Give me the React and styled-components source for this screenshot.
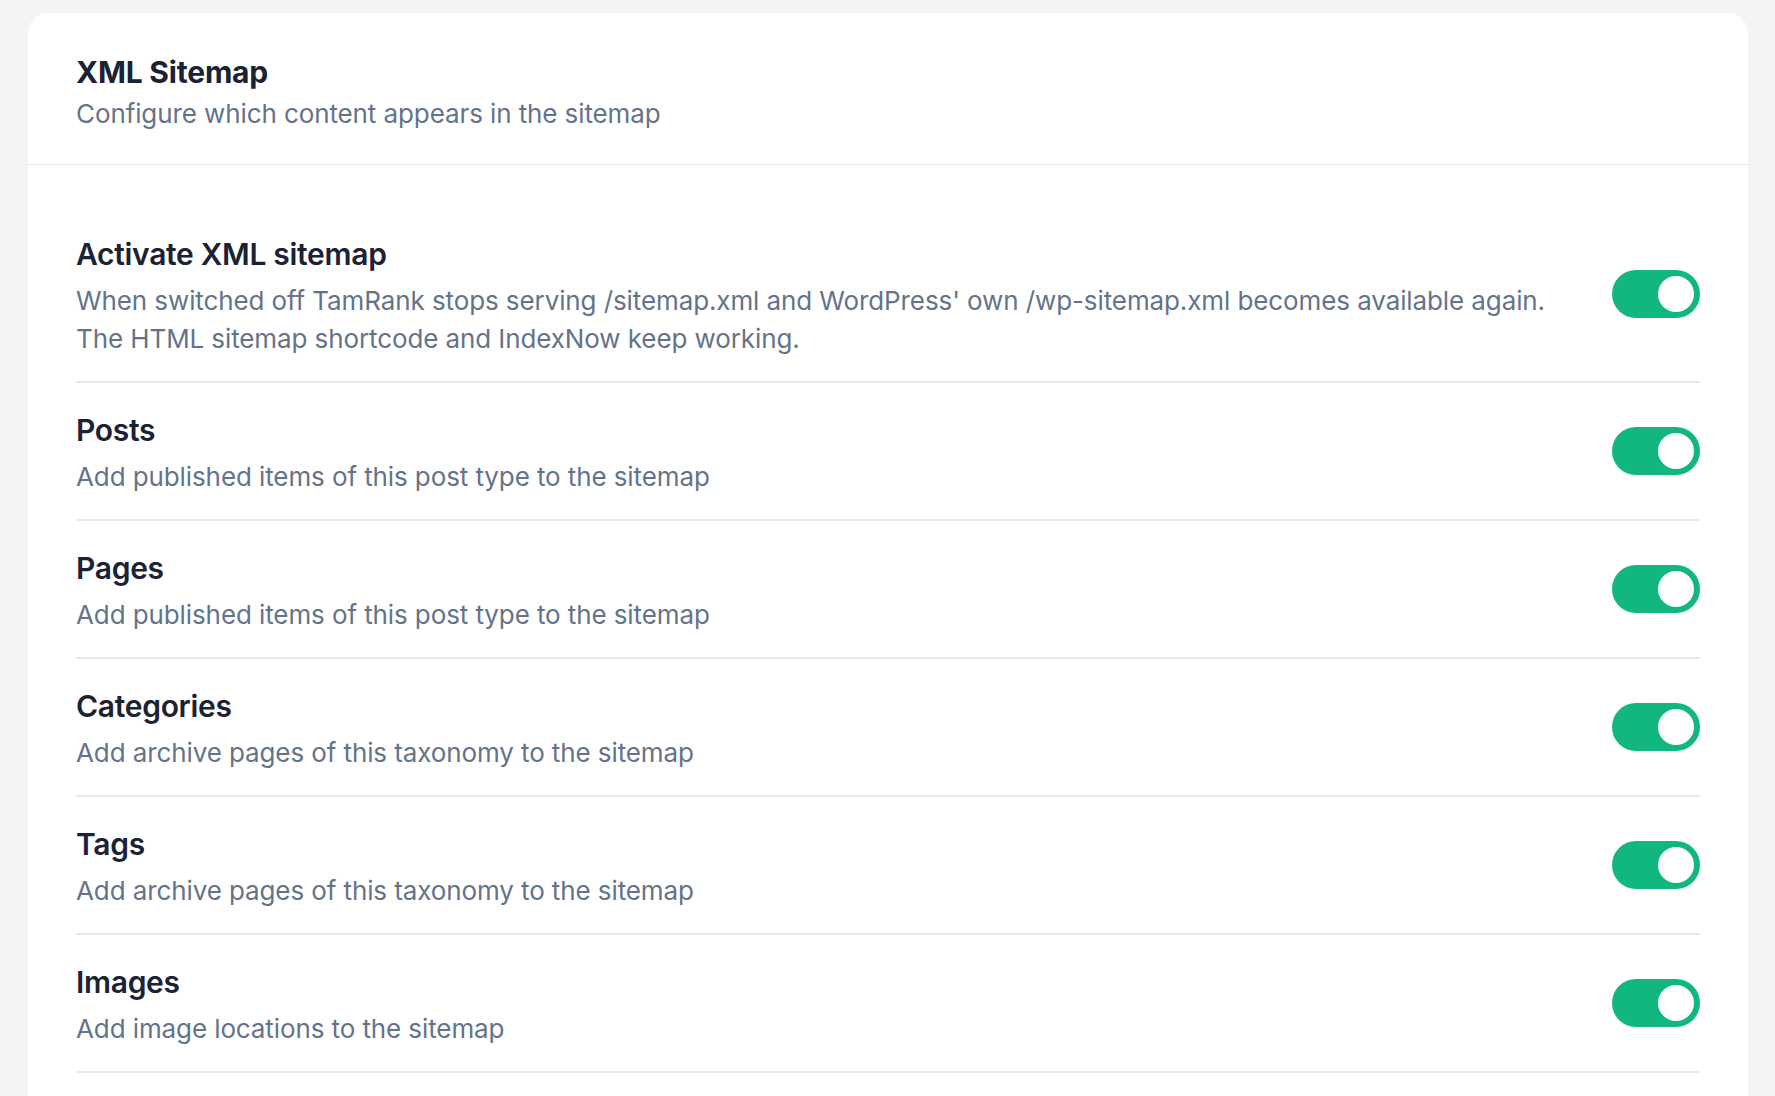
import React, { useState } from "react";
import styled, { createGlobalStyle } from "styled-components";

const GlobalStyle = createGlobalStyle`
  html, body {
    margin: 0;
    padding: 0;
    background: #f5f4f2;
  }
  body {
    font-family: Inter, "Noto Sans", sans-serif;
    -webkit-font-smoothing: antialiased;
  }
`;

const Page = styled.div`
  padding: 13px 27px 0 28px;
  min-height: 100vh;
  box-sizing: border-box;
`;

const Card = styled.section`
  background: #ffffff;
  border-radius: 20px;
  box-shadow: 0 1px 2px rgba(0, 0, 0, 0.03);
  overflow: hidden;
`;

const Header = styled.header`
  display: flex;
  flex-direction: column;
  gap: 3px;
  padding: 39px 48px 31px;
  border-bottom: 1.5px solid #e8e8e8;
`;

const Heading = styled.h2`
  margin: 0;
  font-size: 30px;
  line-height: 40px;
  font-weight: 700;
  letter-spacing: -0.2px;
  color: #1b2233;
`;

const Subheading = styled.p`
  margin: 0;
  font-size: 26px;
  line-height: 38px;
  font-weight: 400;
  letter-spacing: -0.1px;
  color: #65738a;
`;

const List = styled.div`
  padding: 42px 48px 48px;
`;

const Row = styled.div`
  display: flex;
  align-items: center;
  justify-content: space-between;
  gap: 48px;
  padding: 27px 0 23px;
  border-bottom: 2px solid #e9e9e9;
`;

const Text = styled.div`
  display: flex;
  flex-direction: column;
  gap: 8px;
  min-width: 0;
`;

const Title = styled.h3`
  margin: 0;
  font-size: 30px;
  line-height: 40px;
  font-weight: 600;
  letter-spacing: -0.3px;
  color: #1b2233;
`;

const Description = styled.p`
  margin: 0;
  font-size: 26px;
  line-height: 38px;
  font-weight: 400;
  letter-spacing: -0.1px;
  color: #65738a;
`;

const Switch = styled.button`
  flex: none;
  position: relative;
  width: 88px;
  height: 48px;
  margin-bottom: 4px;
  padding: 0;
  border: none;
  border-radius: 24px;
  background: ${props => (props.on ? "#12b77f" : "#d4d7dd")};
  cursor: pointer;
  transition: background 0.2s ease-in-out;
`;

const Knob = styled.span`
  position: absolute;
  top: 6px;
  left: ${props => (props.on ? "46px" : "6px")};
  width: 36px;
  height: 36px;
  border-radius: 50%;
  background: #ffffff;
  transition: left 0.2s ease-in-out;
`;

const settings = [
  {
    id: "sitemap",
    title: "Activate XML sitemap",
    description: [
      "When switched off TamRank stops serving /sitemap.xml and WordPress' own /wp-sitemap.xml becomes available again.",
      "The HTML sitemap shortcode and IndexNow keep working."
    ]
  },
  {
    id: "posts",
    title: "Posts",
    description: ["Add published items of this post type to the sitemap"]
  },
  {
    id: "pages",
    title: "Pages",
    description: ["Add published items of this post type to the sitemap"]
  },
  {
    id: "categories",
    title: "Categories",
    description: ["Add archive pages of this taxonomy to the sitemap"]
  },
  {
    id: "tags",
    title: "Tags",
    description: ["Add archive pages of this taxonomy to the sitemap"]
  },
  {
    id: "images",
    title: "Images",
    description: ["Add image locations to the sitemap"]
  }
];

const Toggle = ({ on, onChange, label }) => (
  <Switch
    type="button"
    role="switch"
    aria-checked={on}
    aria-label={label}
    on={on ? 1 : 0}
    onClick={onChange}
  >
    <Knob on={on ? 1 : 0} />
  </Switch>
);

const App = () => {
  const [values, setValues] = useState(
    settings.reduce((acc, s) => ({ ...acc, [s.id]: true }), {})
  );

  const flip = id => setValues(v => ({ ...v, [id]: !v[id] }));

  return (
    <>
      <GlobalStyle />
      <Page>
        <Card>
          <Header>
            <Heading>XML Sitemap</Heading>
            <Subheading>Configure which content appears in the sitemap</Subheading>
          </Header>
          <List>
            {settings.map(s => (
              <Row key={s.id}>
                <Text>
                  <Title>{s.title}</Title>
                  <Description>
                    {s.description.map((line, i) => (
                      <React.Fragment key={i}>
                        {i > 0 && <br />}
                        {line}
                      </React.Fragment>
                    ))}
                  </Description>
                </Text>
                <Toggle
                  on={values[s.id]}
                  label={s.title}
                  onChange={() => flip(s.id)}
                />
              </Row>
            ))}
          </List>
        </Card>
      </Page>
    </>
  );
};

export default App;
